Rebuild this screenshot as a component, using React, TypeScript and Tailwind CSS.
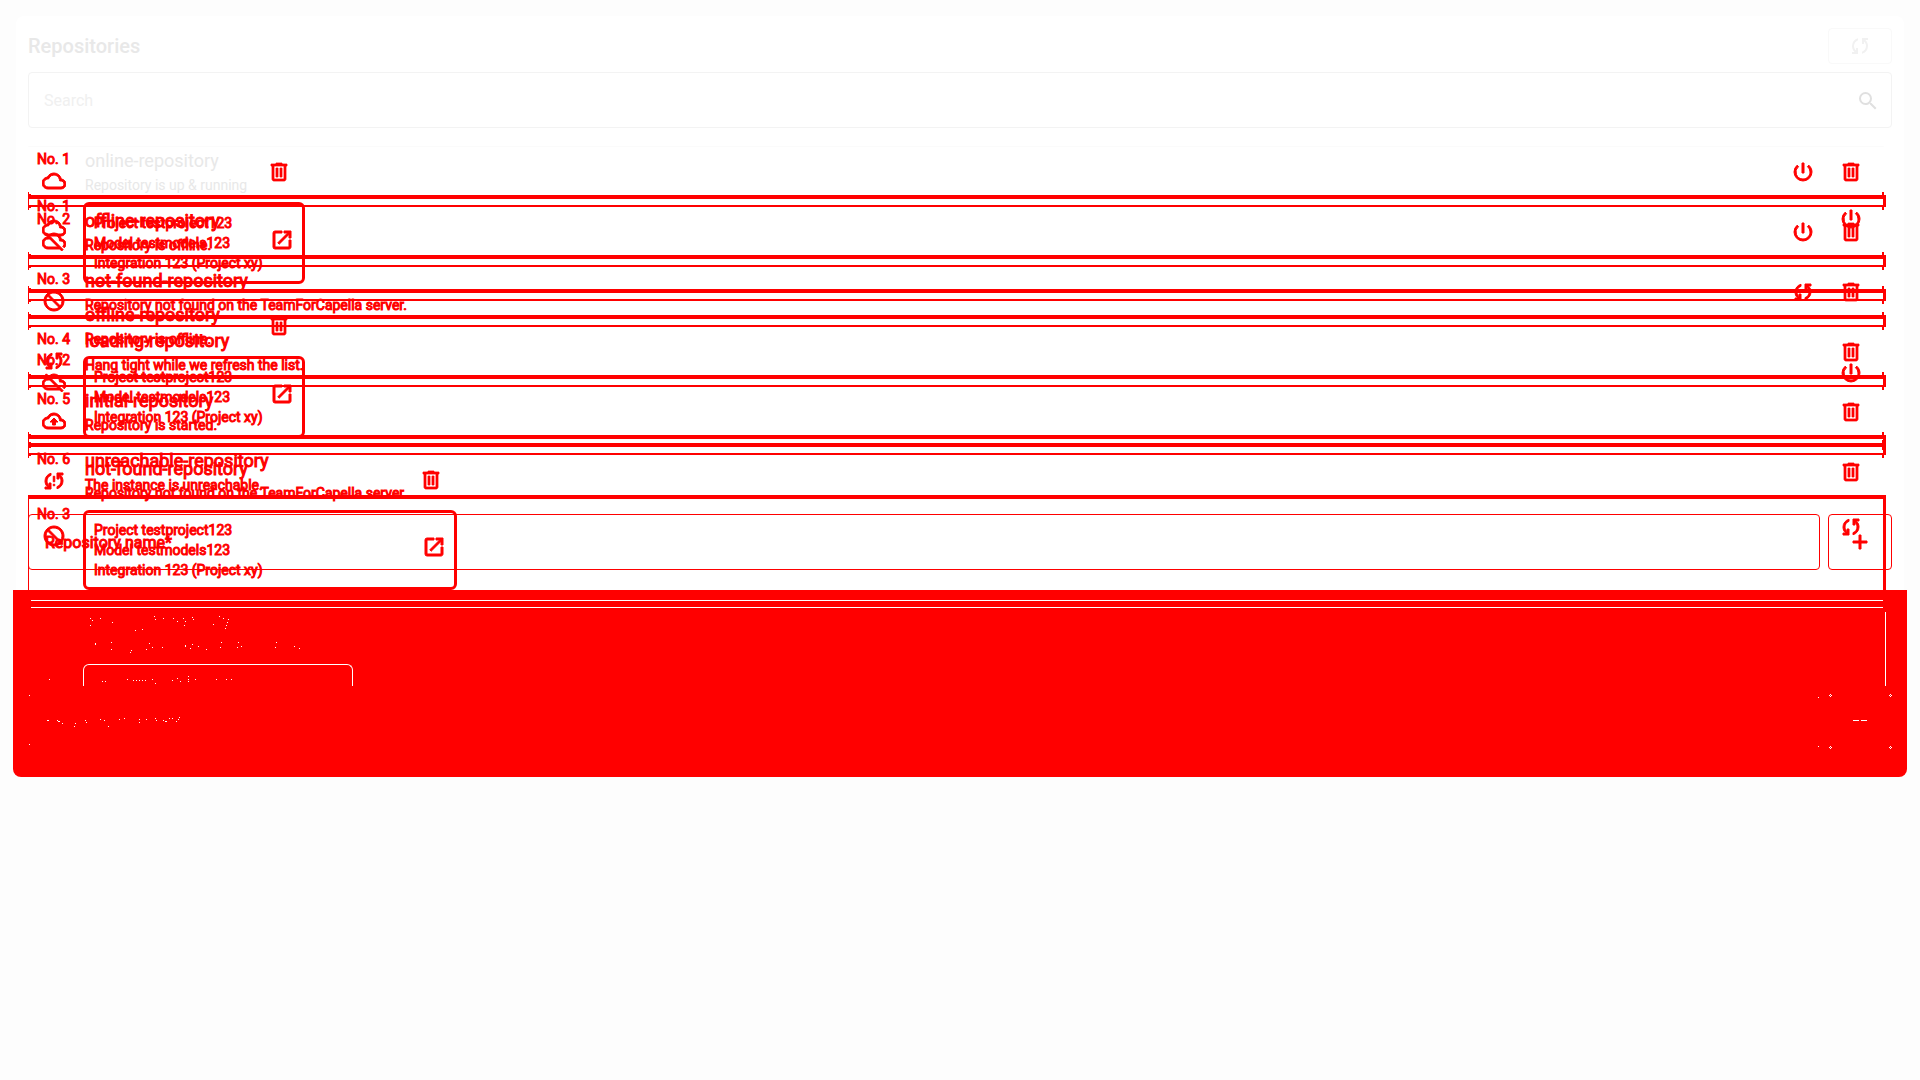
import React from "react";
import { MdOutlineCloud, MdOutlineCloudOff, MdBlock, MdOutlineBackup, MdPowerSettingsNew, MdOpenInNew, MdSearch, MdAdd } from "react-icons/md";

const thick = "h-6 w-6 shrink-0 text-[#ff0000] stroke-[#ff0000] stroke-1 [&>path[fill=none]]:stroke-none";

const SYNC_LEFT =
  "M160-160v-80h110l-16-14q-52-46-73-105t-21-119q0-111 66.5-197.5T400-790v84q-72 26-116 88.5T240-478q0 45 17 87.5t53 78.5l10 10v-98h80v240H160Z";
const SYNC_RIGHT =
  "M560-170v-84q72-26 116-88.5T720-482q0-45-17-87.5T650-648l-10-10v98h-80v-240h240v80H690l16 14q49 49 71.5 106.5T800-482q0 111-66.5 197.5T560-170Z";

function Sync({ faint = false }: { faint?: boolean }) {
  return (
    <svg viewBox="0 -960 960 960" className="h-6 w-6" fill={faint ? "#f1f1f1" : "#ff0000"} stroke={faint ? "none" : "#ff0000"} strokeWidth={faint ? 0 : 40}>
      <path d={SYNC_LEFT} />
      <path d={SYNC_RIGHT} />
    </svg>
  );
}

function SyncProblem() {
  return (
    <svg viewBox="0 -960 960 960" className="h-6 w-6" fill="#ff0000" stroke="#ff0000" strokeWidth="40">
      <path d={SYNC_LEFT} transform="translate(-40 0)" />
      <path d={SYNC_RIGHT} transform="translate(40 0)" />
      <path d="M450-670h60v220h-60ZM450-350h60v60h-60Z" />
    </svg>
  );
}

function Trash() {
  return (
    <svg viewBox="0 -960 960 960" className="h-6 w-6" fill="#ff0000" stroke="#ff0000" strokeWidth="30">
      <path d="M280-120q-33 0-56.5-23.5T200-200v-520h-40v-80h200v-40h240v40h200v80h-40v520q0 33-23.5 56.5T680-120H280Zm400-600H280v520h400v-520ZM360-280h80v-360h-80v360Zm160 0h80v-360h-80v360Z" />
    </svg>
  );
}

const Cloud = () => <MdOutlineCloud className={thick} />;
const CloudOff = () => <MdOutlineCloudOff className={thick} />;
const Block = () => <MdBlock className={`${thick} -scale-x-100`} />;
const Backup = () => <MdOutlineBackup className={thick} />;
const Power = () => <MdPowerSettingsNew className={thick} />;

type Action = "power" | "sync" | "none";
type Repo = { no: number; name: string; status: string; icon: () => React.ReactElement; action: Action; faint?: boolean };

const repos: Repo[] = [
  { no: 1, name: "online-repository", status: "Repository is up & running", icon: Cloud, action: "power", faint: true },
  { no: 2, name: "offline-repository", status: "Repository is offline.", icon: CloudOff, action: "power" },
  { no: 3, name: "not-found-repository", status: "Repository not found on the TeamForCapella server.", icon: Block, action: "sync" },
  { no: 4, name: "loading-repository", status: "Hang tight while we refresh the list.", icon: Sync, action: "none" },
  { no: 5, name: "initial-repository", status: "Repository is started.", icon: Backup, action: "none" },
  { no: 6, name: "unreachable-repository", status: "The instance is unreachable.", icon: SyncProblem, action: "none" },
];

const strong = "text-[#ff0000] [-webkit-text-stroke:1px_#ff0000]";

/* The first row's names are drawn once, by the compact list. */
function Names({ repo }: { repo: Repo }) {
  return (
    <div className={`pt-1 whitespace-nowrap ${repo.faint ? "text-[#e8e8e8]" : strong}`}>
      <div className="text-lg leading-6">{repo.name}</div>
      <div className="text-sm leading-6">{repo.status}</div>
    </div>
  );
}

function Badge({ repo }: { repo: Repo }) {
  const Icon = repo.icon;
  return (
    <div className="flex w-[51px] shrink-0 flex-col items-center">
      <span className={`text-sm leading-5 ${strong}`}>No. {repo.no}</span>
      <Icon />
    </div>
  );
}

function ActionIcon({ action }: { action: Action }) {
  if (action === "power") return <button aria-label="Toggle"><Power /></button>;
  if (action === "sync") return <button aria-label="Recreate"><Sync /></button>;
  return null;
}

const Seam = () => (
  <div className="relative h-3 border-t-4 border-r-[3px] border-b-2 border-l border-[#ff0000]">
    <div className="absolute -top-[7px] -left-px h-[18px] w-px bg-[#ff0000]" />
    <div className="absolute -top-[5px] left-0 h-3.5 w-0.5 border-y-2 border-[#ff0000]" />
    <div className="absolute -top-[7px] -right-px h-[18px] w-0.5 border-y-4 border-[#ff0000]" />
  </div>
);

function CompactList() {
  return (
    <div className="col-start-1 row-start-1">
      <div className="mr-1.5">
        {repos.map((r, i) => (
          <React.Fragment key={r.no}>
            <div className="flex h-12 items-center pr-[23px]">
              <Badge repo={r} />
              <div className="ml-1.5 grow"><Names repo={r} /></div>
              <div className="flex gap-6 pt-0.5">
                <ActionIcon action={r.action} />
                <button aria-label={`Delete ${r.name}`}><Trash /></button>
              </div>
            </div>
            {i < repos.length - 1 ? <Seam /> : <div className="h-1 bg-[#ff0000]" />}
          </React.Fragment>
        ))}
      </div>
      <form className="mt-[15px] flex gap-2">
        <input
          aria-label="Repository name"
          placeholder="Repository name*"
          className="h-14 min-w-0 grow rounded border border-[#ff0000] bg-transparent px-4 text-base placeholder:text-[#ff0000] placeholder:[-webkit-text-stroke:1px_#ff0000]"
        />
        <button type="button" aria-label="Add repository" className="flex h-14 w-16 items-center justify-center rounded border border-[#ff0000]">
          <MdAdd className="h-6 w-6 stroke-[#ff0000] stroke-1 text-[#ff0000] [&>path[fill=none]]:stroke-none" />
        </button>
      </form>
    </div>
  );
}

function Integration({ wide = false }: { wide?: boolean }) {
  return (
    <a href="#" className={`flex h-[82px] items-center justify-between rounded-md border-[3px] border-[#ff0000] pr-2 pb-px pl-2 ${wide ? "w-[374px]" : "w-[222px]"}`}>
      <span className={`whitespace-nowrap text-sm leading-5 ${strong}`}>
        Project testproject123
        <br />
        Model testmodels123
        <br />
        Integration 123 (Project xy)
      </span>
      <span className="pb-1.5">
        <MdOpenInNew className={thick} />
      </span>
    </a>
  );
}

function DetailRow({ repo, wide = false }: { repo: Repo; wide?: boolean }) {
  return (
    <div className={`flex pr-[23px] ${wide ? "h-[135px]" : "h-[142px]"}`}>
      <div className="flex h-[142px] items-center"><Badge repo={repo} /></div>
      <div className="ml-1 flex grow flex-col gap-[7px]">
        <div className={`flex h-12 items-center justify-between pr-3.5 pl-0.5 ${wide ? "w-[374px]" : "w-[222px]"}`}>
          <div className="w-0">
            {!repo.faint && <Names repo={repo} />}
          </div>
          <button aria-label={`Delete ${repo.name}`} className="pt-0.5"><Trash /></button>
        </div>
        <Integration wide={wide} />
      </div>
      <div className="flex h-[142px] items-center pt-0.5"><ActionIcon action={repo.action} /></div>
    </div>
  );
}

const specks: [number, number][] = [
  [90, 620], [92, 622], [100, 620], [112, 624], [90, 627], [154, 618], [155, 621], [163, 620], [173, 620], [177, 623], [183, 620], [185, 623], [184, 627], [192, 619], [193, 621], [213, 626], [219, 618], [223, 620], [228, 621], [227, 624], [226, 627], [225, 630], [135, 632], [142, 631],
  [95, 645], [95, 646], [111, 644], [111, 651], [131, 652], [130, 654], [146, 651], [149, 645], [152, 649], [162, 649], [185, 647], [185, 648], [190, 650], [192, 646], [198, 648], [206, 651], [220, 649], [221, 644], [237, 649], [238, 644], [241, 648], [275, 649], [276, 644], [294, 648], [299, 650],
  [102, 683], [105, 683], [127, 681], [133, 682], [136, 682], [139, 682], [142, 682], [145, 682], [152, 681], [155, 685], [172, 682], [177, 680], [180, 683], [188, 678], [188, 681], [188, 683], [195, 681], [216, 681], [226, 681], [231, 681], [49, 681], [29, 697], [29, 746],
  [47, 722], [48, 722], [57, 722], [58, 723], [59, 723], [62, 725], [74, 728], [75, 725], [85, 722], [86, 724], [100, 721], [104, 722], [108, 728], [119, 721], [124, 720], [139, 721], [139, 724], [146, 721], [155, 720], [156, 722], [163, 722], [165, 723], [166, 723], [169, 720], [172, 720], [176, 723], [178, 721], [179, 719],
];

const ring = [[0, -1], [-1, 0], [1, 0], [0, 1]];

function Residue() {
  return (
    <div className="-mx-[15px] h-[187px] rounded-b-lg bg-[#ff0000] px-[15px] pt-2.5">
      <div className="mr-[9px] ml-[3px] h-2 border-y border-white" />
      <div className="mr-1.5 flex justify-between">
        <div className="grid">
          <div className="col-start-1 row-start-1 mt-14 ml-[55px] h-[22px] w-[270px] rounded-t-md border-x border-t border-white" />
          <svg className="col-start-1 row-start-1" width="360" height="160" viewBox="28 610 360 160" fill="#ffffff">
            {specks.map(([x, y], i) => (
              <rect key={i} x={x} y={y} width="1" height="1" />
            ))}
          </svg>
        </div>
        <svg className="overflow-visible" width="70" height="160" viewBox="1816 608 70 160" fill="#ffffff">
          <rect x="1885" y="612" width="1" height="74" />
          <rect x="1853" y="720" width="6" height="1" />
          <rect x="1861" y="720" width="6" height="1" />
          <rect x="1818" y="697" width="1" height="1" />
          <rect x="1818" y="746" width="1" height="1" />
          {[[1830, 695], [1890, 695], [1830, 747], [1890, 747]].map(([cx, cy]) =>
            ring.map(([dx, dy]) => <rect key={`${cx}${cy}${dx}${dy}`} x={cx + dx} y={cy + dy} width="1" height="1" />)
          )}
        </svg>
      </div>
    </div>
  );
}

function DetailList() {
  return (
    <div className="col-start-1 row-start-1">
      <div className="mr-1.5">
        <DetailRow repo={repos[0]} />
        <Seam />
        <DetailRow repo={repos[1]} />
        <Seam />
        <div className="relative">
          <DetailRow repo={repos[2]} wide />
          <div className="pointer-events-none absolute inset-x-0 top-10 bottom-0 border-r-[3px] border-l border-[#ff0000]" />
        </div>
      </div>
      <Residue />
    </div>
  );
}

export default function App() {
  return (
    <div className="min-h-screen bg-[#fdfdfd] p-4 font-['Roboto',sans-serif]">
      <main className="rounded-lg bg-white px-3 pt-3">
        <header className="flex items-center justify-between">
          <h1 className="text-xl font-medium text-[#e8e8e8]">Repositories</h1>
          <button aria-label="Refresh" className="flex h-9 w-16 items-center justify-center rounded border border-[#f9f9f9]">
            <Sync faint />
          </button>
        </header>
        <label className="mt-2 flex h-14 items-center rounded border border-[#f3f3f3] pt-0.5 pr-[11px] pl-[15px]">
          <input aria-label="Search" placeholder="Search" className="min-w-0 grow bg-transparent text-base placeholder:text-[#f0f0f0]" />
          <MdSearch className="h-6 w-6 text-[#e0e0e0]" />
        </label>
        <div className="mt-[18px] mr-2 h-px rounded-t bg-[#fbfbfb]" />
        <div className="grid">
          <CompactList />
          <DetailList />
        </div>
      </main>
    </div>
  );
}
